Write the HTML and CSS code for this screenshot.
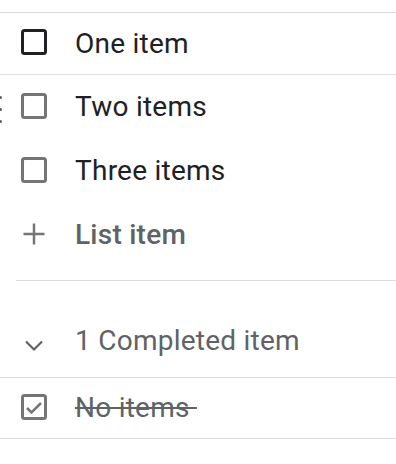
FILE: index.html
```html
<!DOCTYPE html>
<html>
<head>
<meta charset="utf-8">
<link rel="stylesheet" href="styles.css">
</head>
<body>
<div class="list">
  <div class="rule top"></div>
  <div class="row first">
    <svg class="icon" width="32" height="32" viewBox="0 0 32 32"><rect x="4.5" y="4.5" width="23" height="23" rx="2" fill="none" stroke="#202124" stroke-width="3"/></svg>
    <span class="label dark">One item</span>
  </div>
  <div class="rule"></div>
  <div class="row">
    <div class="drag"><i></i><i></i><i></i></div>
    <svg class="icon" width="32" height="32" viewBox="0 0 32 32"><rect x="4.5" y="4.5" width="23" height="23" rx="2" fill="none" stroke="#757575" stroke-width="3"/></svg>
    <span class="label dark">Two items</span>
  </div>
  <div class="row">
    <svg class="icon" width="32" height="32" viewBox="0 0 32 32"><rect x="4.5" y="4.5" width="23" height="23" rx="2" fill="none" stroke="#757575" stroke-width="3"/></svg>
    <span class="label dark">Three items</span>
  </div>
  <div class="row">
    <svg class="icon" width="32" height="32" viewBox="0 0 32 32"><path d="M16 5.5V26.5M5.5 16H26.5" stroke="#757575" stroke-width="2.5" fill="none"/></svg>
    <span class="label add">List item</span>
  </div>
  <div class="rule inset"></div>
  <div class="row completed">
    <svg class="icon chev" width="32" height="32" viewBox="0 0 32 32"><path d="M8 12.5L16 20.5L24 12.5" stroke="#5f6368" stroke-width="2.2" fill="none"/></svg>
    <span class="label muted">1 Completed item</span>
  </div>
  <div class="rule"></div>
  <div class="row done">
    <svg class="icon" width="32" height="32" viewBox="0 0 32 32"><rect x="4.5" y="4.5" width="23" height="23" rx="2" fill="none" stroke="#757575" stroke-width="3"/><path d="M9 17L13.5 21.5L23 12" stroke="#757575" stroke-width="2.5" fill="none"/></svg>
    <span class="label struck">No items&nbsp;</span>
  </div>
  <div class="rule"></div>
</div>
</body>
</html>
```
FILE: styles.css
```css
html, body {
  margin: 0;
  padding: 0;
  background: #ffffff;
}
body {
  font-family: Roboto, "Noto Sans", sans-serif;
  width: 396px;
  height: 464px;
  overflow: hidden;
}
.list {
  display: flex;
  flex-direction: column;
  padding-top: 12px;
}
.rule {
  height: 1px;
  background: #dadce0;
}
.rule.inset {
  margin-left: 16px;
  margin-top: 13px;
}
.row {
  position: relative;
  display: flex;
  align-items: center;
  height: 64px;
  padding-left: 18px;
}
.row.first {
  height: 61px;
}
.row.completed {
  box-sizing: border-box;
  height: 96px;
  padding-top: 24px;
}
.row.done {
  height: 60px;
}
.icon {
  flex: none;
  display: block;
  margin-bottom: 3px;
}
.icon.chev {
  margin-bottom: 0;
  margin-top: 7px;
}
.label {
  margin-left: 25px;
  font-size: 28px;
  letter-spacing: 0.25px;
  line-height: 34px;
  white-space: nowrap;
}
.dark {
  color: #202124;
}
.add {
  color: #5f6368;
  font-weight: 500;
}
.muted {
  color: #5f6368;
}
.struck {
  color: #5f6368;
  text-decoration: line-through;
}
.drag {
  position: absolute;
  left: -1px;
  top: 21px;
  display: flex;
  flex-direction: column;
  gap: 9px;
}
.drag i {
  display: block;
  width: 3px;
  height: 3px;
  border-radius: 50%;
  background: #5f6368;
}
```
